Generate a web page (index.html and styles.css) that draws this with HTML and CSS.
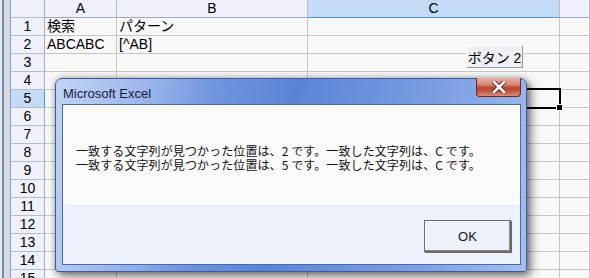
FILE: index.html
```html
<!DOCTYPE html>
<html lang="ja">

<head>
  <meta charset="UTF-8" />
  <title>Microsoft Excel</title>
  <link rel="stylesheet" href="styles.css">
</head>

<body>
  <div class="app">
    <div class="edge"></div>
    <div class="sheet">
      <div class="row head">
        <div class="rh corner"></div>
        <div class="ch">A</div>
        <div class="ch">B</div>
        <div class="ch on">C</div>
        <div class="ch"></div>
      </div>
      <div class="row"><div class="rh">1</div><div class="cell">検索</div><div class="cell">パターン</div><div class="cell"></div><div class="cell"></div></div>
      <div class="row"><div class="rh">2</div><div class="cell">ABCABC</div><div class="cell">[^AB]</div><div class="cell"></div><div class="cell"></div></div>
      <div class="row"><div class="rh">3</div><div class="cell"></div><div class="cell"></div><div class="cell"></div><div class="cell"></div></div>
      <div class="row"><div class="rh">4</div><div class="cell"></div><div class="cell"></div><div class="cell"></div><div class="cell"></div></div>
      <div class="row"><div class="rh on">5</div><div class="cell"></div><div class="cell"></div><div class="cell sel"></div><div class="cell"></div></div>
      <div class="row"><div class="rh">6</div><div class="cell"></div><div class="cell"></div><div class="cell"></div><div class="cell"></div></div>
      <div class="row"><div class="rh">7</div><div class="cell"></div><div class="cell"></div><div class="cell"></div><div class="cell"></div></div>
      <div class="row"><div class="rh">8</div><div class="cell"></div><div class="cell"></div><div class="cell"></div><div class="cell"></div></div>
      <div class="row"><div class="rh">9</div><div class="cell"></div><div class="cell"></div><div class="cell"></div><div class="cell"></div></div>
      <div class="row"><div class="rh">10</div><div class="cell"></div><div class="cell"></div><div class="cell"></div><div class="cell"></div></div>
      <div class="row"><div class="rh">11</div><div class="cell"></div><div class="cell"></div><div class="cell"></div><div class="cell"></div></div>
      <div class="row"><div class="rh">12</div><div class="cell"></div><div class="cell"></div><div class="cell"></div><div class="cell"></div></div>
      <div class="row"><div class="rh">13</div><div class="cell"></div><div class="cell"></div><div class="cell"></div><div class="cell"></div></div>
      <div class="row"><div class="rh">14</div><div class="cell"></div><div class="cell"></div><div class="cell"></div><div class="cell"></div></div>
      <div class="row"><div class="rh">15</div><div class="cell"></div><div class="cell"></div><div class="cell"></div><div class="cell"></div></div>
    </div>
  </div>

  <button type="button" class="formbtn">ボタン 2</button>

  <div class="dialog">
    <div class="titlebar">
      <span class="title">Microsoft Excel</span>
      <div class="close">
        <svg width="14" height="12" viewBox="0 0 14 12">
          <path d="M2 1 L12 11 M12 1 L2 11" stroke="#5a2a20" stroke-width="4.5" stroke-linecap="square" />
          <path d="M2 1 L12 11 M12 1 L2 11" stroke="#fff" stroke-width="2.6" stroke-linecap="square" />
        </svg>
      </div>
    </div>
    <div class="panel">
      <div class="msg">
        <p>一致する文字列が見つかった位置は、2 です。一致した文字列は、C です。</p>
        <p>一致する文字列が見つかった位置は、5 です。一致した文字列は、C です。</p>
      </div>
      <div class="actions">
        <button type="button" class="ok">OK</button>
      </div>
    </div>
  </div>
</body>

</html>
```

FILE: styles.css
```css
body {
  margin: 0;
  width: 590px;
  height: 278px;
  overflow: hidden;
  position: relative;
  background: #f8f8f8;
  font-family: "Liberation Sans", "Noto Sans CJK JP", sans-serif;
  color: #000;
}

.app {
  display: flex;
  height: 278px;
}

.edge {
  width: 11px;
  flex: none;
  box-sizing: border-box;
  background: linear-gradient(to right, #e4e6ee 0, #e4e6ee 2px, #7d8aa6 2px, #7d8aa6 4px, #d6dae6 4px);
  border-right: 1px solid #8e9cb8;
}

.sheet {
  flex: 1;
}

.row {
  display: grid;
  grid-template-columns: 34px 72px 191px 252px 1fr;
  height: 18px;
}

.row > div {
  box-sizing: border-box;
  border-right: 1px solid #c6c6c6;
  border-bottom: 1px solid #c6c6c6;
  font-size: 14px;
  line-height: 17px;
  white-space: nowrap;
}

.cell {
  padding-left: 2px;
  background: #f8f8f8;
}

.rh,
.ch {
  background: #eef1f9;
  text-align: center;
}

.row > .rh {
  border-right-color: #9eaabd;
  border-bottom-color: #b4bdcc;
}

.head > div {
  border-bottom-color: #9eaabd;
  border-right-color: #b4bdcc;
}

.ch.on {
  background: #c3dbf7;
  border-bottom: 1px solid #4a94e8;
}

.rh.on {
  background: #c3dbf7;
  border-right: 1px solid #4a94e8;
}

.sel {
  position: relative;
}

.sel::before {
  content: "";
  position: absolute;
  top: -2px;
  left: -2px;
  right: -2px;
  bottom: -2px;
  border: 2px solid #000;
}

.sel::after {
  content: "";
  position: absolute;
  right: -4px;
  bottom: -4px;
  width: 5px;
  height: 5px;
  background: #000;
  border: 1px solid #fff;
}

.formbtn {
  position: absolute;
  left: 466px;
  top: 45px;
  width: 57px;
  height: 23px;
  padding: 0;
  white-space: nowrap;
  font-family: "Liberation Sans", "Noto Sans CJK JP", sans-serif;
  font-size: 14px;
  color: #000;
  background: #eef0f6;
  border: 1px solid;
  border-color: #fff #9a9a9a #9a9a9a #fff;
}

/* dialog */
.dialog {
  position: absolute;
  left: 55px;
  top: 78px;
  width: 472px;
  height: 194px;
  box-sizing: border-box;
  display: flex;
  flex-direction: column;
  padding: 0 5px 6px 6px;
  border: 1px solid #3d5c9e;
  border-radius: 7px 7px 3px 3px;
  background: linear-gradient(100deg, #c2d3f4 0%, #9cb6ec 18%, #6f95de 32%, #5a84d6 48%, #6e95de 66%, #86a6e6 84%, #a6bfee 100%);
  box-shadow: 4px 4px 10px rgba(0, 0, 0, 0.5), 0 0 6px rgba(0, 0, 0, 0.25);
}

.titlebar {
  height: 25px;
  flex: none;
  display: flex;
  align-items: center;
  justify-content: space-between;
}

.title {
  font-size: 13px;
  color: #151b3c;
  padding-left: 1px;
  padding-top: 3px;
}

.close {
  align-self: flex-start;
  margin-top: -1px;
  width: 45px;
  height: 19px;
  display: flex;
  align-items: center;
  justify-content: center;
  box-sizing: border-box;
  border: 1px solid #6e2a20;
  border-top: none;
  border-radius: 0 0 4px 4px;
  background: linear-gradient(to bottom, #e6b0a4 0%, #d88a78 35%, #b9432c 55%, #c45a44 75%, #dc8a78 100%);
}

.panel {
  flex: 1;
  display: flex;
  flex-direction: column;
  border: 1px solid #4b6aa8;
  background: #ecf0f9;
}

.msg {
  height: 100px;
  box-sizing: border-box;
  padding: 39px 0 0 13px;
  background: #fafafa;
  font-family: "Noto Sans CJK JP", sans-serif;
  font-size: 12px;
  line-height: 14px;
  letter-spacing: 0.1px;
  color: #111;
}

.msg p {
  margin: 0;
}

.actions {
  flex: 1;
  display: flex;
  justify-content: flex-end;
  align-items: flex-start;
  padding: 15px 9px 0 0;
}

.ok {
  width: 87px;
  height: 32px;
  font-family: "Liberation Sans", sans-serif;
  font-size: 13px;
  color: #111;
  background: #ecf0f9;
  border: 1px solid #6a6a6a;
  box-shadow: inset -1px -1px 0 #8a8a8a, inset 1px 1px 0 #fff, 1px 1px 0 #6a6a6a;
}
```
